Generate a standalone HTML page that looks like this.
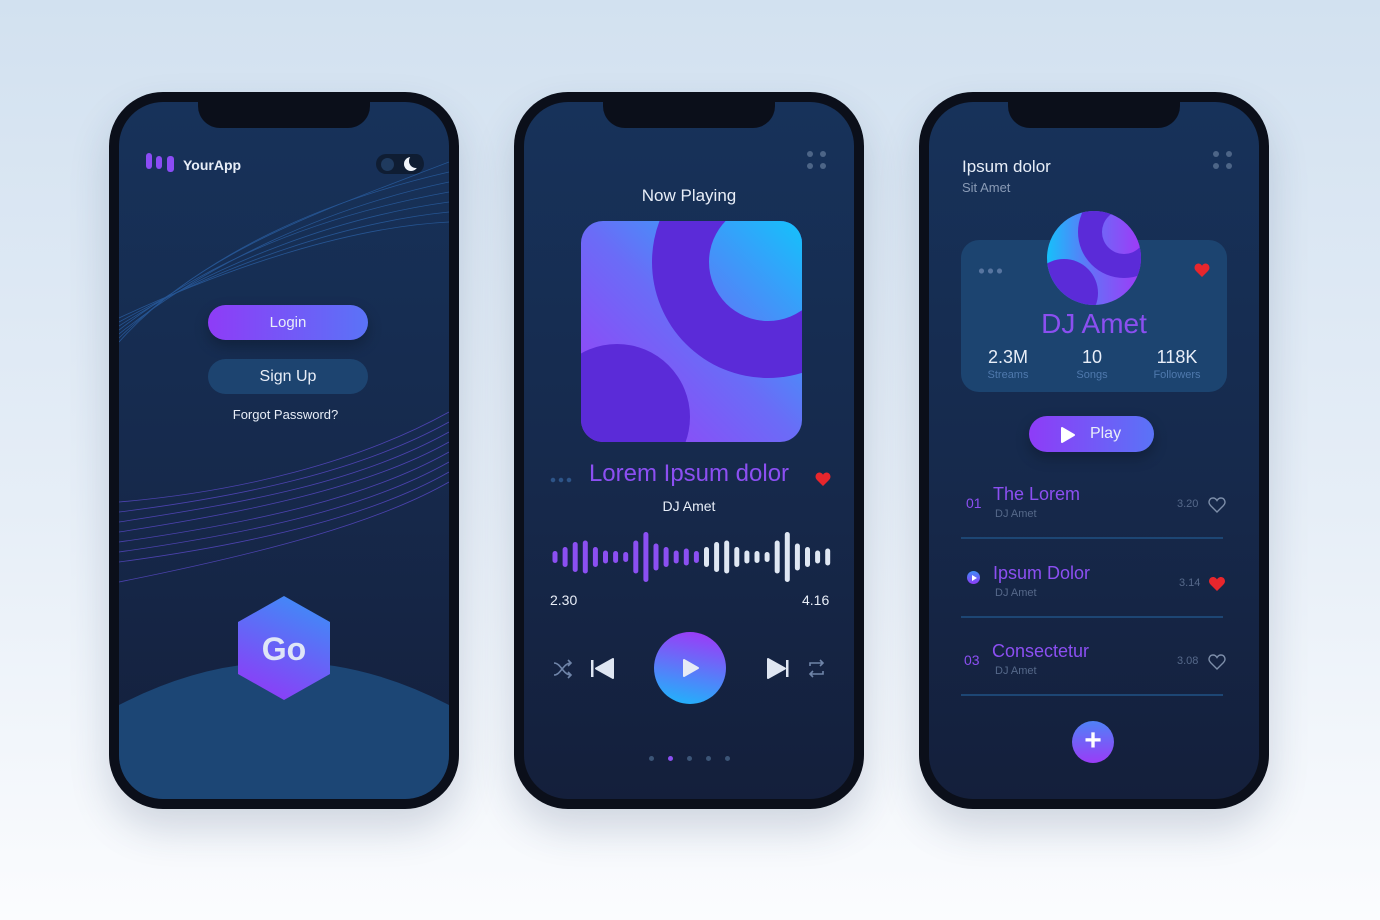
<!DOCTYPE html>
<html><head><meta charset="utf-8"><style>
*{margin:0;padding:0;box-sizing:border-box}
body{width:1380px;height:920px;overflow:hidden;background:linear-gradient(#d2e1f0 0%,#e6eef7 55%,#fbfcfe 100%);font-family:"Liberation Sans",sans-serif;position:relative}
.ph{position:absolute;top:92px;width:350px;height:717px;background:#0b0f1a;border-radius:54px;box-shadow:0 20px 40px rgba(40,60,100,.18)}
.sc{position:absolute;left:10px;top:10px;width:330px;height:697px;border-radius:44px;overflow:hidden;background:linear-gradient(#17325a 0%,#162a4d 50%,#141f3b 100%)}
.notch{position:absolute;left:79px;top:0;width:172px;height:26px;background:#0b0f1a;border-radius:0 0 22px 22px}
.a{position:absolute}
.w{color:#e8eef8}
.btn{position:absolute;border-radius:18px;text-align:center;color:#e8eef8;font-size:15px}
.dots4{position:absolute;width:20px;height:20px}
.dots4 i{position:absolute;width:6px;height:6px;border-radius:50%;background:#4d6587}
.pd{position:absolute;top:654px;width:5px;height:5px;border-radius:50%;background:#3c5577}
</style></head><body>

<!-- Phone 1 -->
<div class="ph" style="left:109px"><div class="sc">
<svg class="a" style="left:0;top:0" width="330" height="697">
<g fill="none" stroke="#2a5fa3" stroke-width="0.8" opacity=".8">
<path d="M0 240 C80 150 200 110 330 60"/><path d="M0 236 C90 150 200 100 330 70"/><path d="M0 232 C90 160 210 105 330 80"/><path d="M0 228 C100 150 220 110 330 90"/><path d="M0 224 C100 160 220 115 330 100"/><path d="M0 220 C110 160 230 120 330 110"/><path d="M0 216 C110 165 230 125 330 120"/>
</g>
<g fill="none" stroke="#5a49c9" stroke-width="0.8" opacity=".8">
<path d="M0 400 C120 390 240 360 330 310"/><path d="M0 410 C120 395 240 370 330 320"/><path d="M0 420 C130 400 240 380 330 330"/><path d="M0 430 C130 410 250 385 330 340"/><path d="M0 440 C140 420 250 395 330 350"/><path d="M0 450 C140 430 250 405 330 360"/><path d="M0 460 C150 440 260 410 330 370"/><path d="M0 480 C150 450 260 420 330 380"/>
</g>
<path d="M-60 697 L-60 640 Q165 480 390 640 L390 697Z" fill="#1c4675"/>
</svg>
<div class="notch"></div>
<div class="a" style="left:27px;top:51px;width:6px;height:16px;border-radius:3px;background:#8b4cf5"></div>
<div class="a" style="left:37px;top:54px;width:6px;height:13px;border-radius:3px;background:#8b4cf5"></div>
<div class="a" style="left:48px;top:54px;width:7px;height:16px;border-radius:3px;background:#8b4cf5"></div>
<div class="a w" style="left:64px;top:55px;font-size:14px;font-weight:bold">YourApp</div>
<div class="a" style="left:257px;top:52px;width:48px;height:20px;border-radius:10px;background:#0f1d33"></div>
<div class="a" style="left:262px;top:56px;width:13px;height:13px;border-radius:50%;background:#1f3a5e"></div>
<div class="a" style="left:285px;top:55px;width:14px;height:14px;border-radius:50%;background:#f0f4fa"></div>
<div class="a" style="left:290px;top:52px;width:14px;height:14px;border-radius:50%;background:#0f1d33"></div>
<div class="btn" style="left:89px;top:203px;width:160px;height:35px;line-height:35px;background:linear-gradient(90deg,#8e3cf7,#5a73f7);box-shadow:0 6px 14px rgba(0,0,0,.25)">Login</div>
<div class="btn" style="left:89px;top:257px;width:160px;height:35px;line-height:35px;background:#1d4470;font-size:16px">Sign Up</div>
<div class="a w" style="left:0;width:333px;text-align:center;top:305px;font-size:13px">Forgot Password?</div>
<svg class="a" style="left:119px;top:494px" width="92" height="104"><defs><linearGradient id="hg" x1="0.7" y1="0" x2="0.3" y2="1"><stop offset="0" stop-color="#3f8cf7"/><stop offset="1" stop-color="#8d3cf7"/></linearGradient></defs><polygon points="46,0 92,26 92,78 46,104 0,78 0,26" fill="url(#hg)"/><text x="46" y="64" text-anchor="middle" font-family="Liberation Sans" font-size="32" font-weight="bold" fill="#dfe6f7">Go</text></svg>
</div></div>

<!-- Phone 2 -->
<div class="ph" style="left:514px"><div class="sc">
<div class="notch"></div>
<div class="dots4" style="left:283px;top:49px"><i style="left:0;top:0"></i><i style="left:13px;top:0"></i><i style="left:0;top:12px"></i><i style="left:13px;top:12px"></i></div>
<div class="a w" style="left:0;width:330px;text-align:center;top:84px;font-size:17px">Now Playing</div>
<svg class="a" style="left:57px;top:119px" width="221" height="221"><defs><linearGradient id="ag" gradientUnits="userSpaceOnUse" x1="221" y1="0" x2="0" y2="221"><stop offset="0" stop-color="#14c2fb"/><stop offset=".5" stop-color="#6a6cf7"/><stop offset="1" stop-color="#a039f7"/></linearGradient><clipPath id="ac"><rect width="221" height="221" rx="22"/></clipPath></defs>
<g clip-path="url(#ac)"><rect width="221" height="221" fill="url(#ag)"/><circle cx="187" cy="41" r="116" fill="#5b2bd8"/><circle cx="187" cy="41" r="59" fill="url(#ag)"/><circle cx="36" cy="196" r="73" fill="#5b2bd8"/></g></svg>
<div class="a" style="left:25px;top:375px;width:24px;height:6px;background:radial-gradient(circle,#2d5488 2px,transparent 2.5px) 0 0/8px 6px"></div>
<div class="a" style="left:0;width:330px;text-align:center;top:358px;font-size:24px;color:#8c4ff2">Lorem Ipsum dolor</div>
<svg class="a" style="left:291px;top:370px" width="16" height="15"><path d="M8 14 L2 8 C-1 5 1 0.5 4.5 0.5 C6.3 0.5 7.3 1.6 8 2.8 C8.7 1.6 9.7 0.5 11.5 0.5 C15 0.5 17 5 14 8Z" fill="#e8262c"/></svg>
<div class="a w" style="left:0;width:330px;text-align:center;top:396px;font-size:14px">DJ Amet</div>
<svg class="a" style="left:0;top:420px" width="330" height="70" id="wave"></svg>
<div class="a w" style="left:26px;top:490px;font-size:14px">2.30</div>
<div class="a w" style="left:278px;top:490px;font-size:14px">4.16</div>
<svg class="a" style="left:29px;top:528px" width="280" height="76">
<g stroke="#6f84a8" stroke-width="1.6" fill="none"><path d="M1 33 C8 33 10 45 18 45 M1 45 C8 45 10 33 18 33 M15 30 L18 33 L15 36 M15 42 L18 45 L15 48"/></g>
<rect x="38" y="30" width="2.5" height="17" fill="#dfe6f2"/><path d="M43 38.5 L60 29 L60 48 Z" fill="#dfe6f2" stroke="#dfe6f2" stroke-width="2" stroke-linejoin="round"/>
<defs><linearGradient id="pg" x1=".6" y1="0" x2=".4" y2="1"><stop offset="0" stop-color="#9a3cf7"/><stop offset="1" stop-color="#23b0fb"/></linearGradient></defs>
<circle cx="137" cy="38" r="36" fill="url(#pg)"/><path d="M131 30 L145 38 L131 46Z" fill="#e6ebf5" stroke="#e6ebf5" stroke-width="2" stroke-linejoin="round"/>
<path d="M215 29 L232 38.5 L215 48 Z" fill="#dfe6f2" stroke="#dfe6f2" stroke-width="2" stroke-linejoin="round"/><rect x="233" y="30" width="2.5" height="17" fill="#dfe6f2"/>
<g stroke="#6f84a8" stroke-width="1.6" fill="none"><path d="M257 36 V33 H270 M267 30 L270 33 L267 36 M270 41 V44 H257 M260 41 L257 44 L260 47"/></g>
</svg>
<div class="pd" style="left:125px"></div><div class="pd" style="left:144px;background:#8c4ff2"></div><div class="pd" style="left:163px"></div><div class="pd" style="left:182px"></div><div class="pd" style="left:201px"></div>
</div></div>

<!-- Phone 3 -->
<div class="ph" style="left:919px"><div class="sc">
<div class="notch"></div>
<div class="dots4" style="left:284px;top:49px"><i style="left:0;top:0"></i><i style="left:13px;top:0"></i><i style="left:0;top:12px"></i><i style="left:13px;top:12px"></i></div>
<div class="a w" style="left:33px;top:55px;font-size:17px">Ipsum dolor</div>
<div class="a" style="left:33px;top:78px;font-size:13px;color:#8a9bb6">Sit Amet</div>
<div class="a" style="left:32px;top:138px;width:266px;height:152px;border-radius:18px;background:#1c4470"></div>
<div class="a" style="left:48px;top:166px;width:27px;height:6px;background:radial-gradient(circle,#5775a0 2.3px,transparent 2.8px) 0 0/9px 6px"></div>
<svg class="a" style="left:265px;top:161px" width="16" height="15"><path d="M8 14 L2 8 C-1 5 1 0.5 4.5 0.5 C6.3 0.5 7.3 1.6 8 2.8 C8.7 1.6 9.7 0.5 11.5 0.5 C15 0.5 17 5 14 8Z" fill="#e8262c"/></svg>
<svg class="a" style="left:117px;top:108px" width="96" height="96"><defs><linearGradient id="cg" gradientUnits="userSpaceOnUse" x1="0" y1="48" x2="96" y2="48"><stop offset="0" stop-color="#14c2fb"/><stop offset=".5" stop-color="#6a6cf7"/><stop offset="1" stop-color="#a039f7"/></linearGradient><clipPath id="cc"><circle cx="48" cy="48" r="47"/></clipPath></defs><g clip-path="url(#cc)"><rect width="96" height="96" fill="url(#cg)"/><circle cx="78" cy="22" r="46" fill="#5b2bd8"/><circle cx="78" cy="22" r="22" fill="url(#cg)"/><circle cx="18" cy="83" r="34" fill="#5b2bd8"/></g></svg>
<div class="a" style="left:0;width:330px;text-align:center;top:206px;font-size:28px;color:#8b4ff0">DJ Amet</div>
<div class="a w" style="left:49px;width:60px;text-align:center;top:245px;font-size:18px">2.3M</div>
<div class="a" style="left:49px;width:60px;text-align:center;top:267px;font-size:11px;color:#4f79ad">Streams</div>
<div class="a w" style="left:133px;width:60px;text-align:center;top:245px;font-size:18px">10</div>
<div class="a" style="left:133px;width:60px;text-align:center;top:267px;font-size:11px;color:#4f79ad">Songs</div>
<div class="a w" style="left:218px;width:60px;text-align:center;top:245px;font-size:18px">118K</div>
<div class="a" style="left:218px;width:60px;text-align:center;top:267px;font-size:11px;color:#4f79ad">Followers</div>
<div class="btn" style="left:100px;top:314px;width:125px;height:36px;line-height:36px;background:linear-gradient(90deg,#8e3cf7,#5a73f7);box-shadow:0 6px 14px rgba(0,0,0,.25);font-size:16px;padding-left:28px">Play</div>
<svg class="a" style="left:130px;top:324px" width="18" height="18"><path d="M3 2 L15 9 L3 16Z" fill="#fff" stroke="#fff" stroke-width="2" stroke-linejoin="round"/></svg>

<div class="a" style="left:37px;top:393px;font-size:14px;color:#8c4ff2">01</div>
<div class="a" style="left:64px;top:382px;font-size:18px;color:#8c4ff2">The Lorem</div>
<div class="a" style="left:66px;top:406px;font-size:11px;color:#56698a">DJ Amet</div>
<div class="a" style="left:248px;top:396px;font-size:11px;color:#56698a">3.20</div>
<svg class="a" style="left:279px;top:395px" width="18" height="16"><path d="M9 15 L2.5 8.5 C-0.5 5.5 1.5 1 5 1 C7 1 8.2 2.2 9 3.5 C9.8 2.2 11 1 13 1 C16.5 1 18.5 5.5 15.5 8.5Z" fill="none" stroke="#7d8ea9" stroke-width="1.4"/></svg>
<div class="a" style="left:32px;top:435px;width:262px;height:2px;background:#1d4674"></div>

<div class="a" style="left:38px;top:469px;width:13px;height:13px;border-radius:50%;background:linear-gradient(#3f8cf7,#8d3cf7)"></div>
<div class="a" style="left:43px;top:472.5px;width:0;height:0;border-left:5px solid #fff;border-top:3px solid transparent;border-bottom:3px solid transparent"></div>
<div class="a" style="left:64px;top:461px;font-size:18px;color:#8c4ff2">Ipsum Dolor</div>
<div class="a" style="left:66px;top:485px;font-size:11px;color:#56698a">DJ Amet</div>
<div class="a" style="left:250px;top:475px;font-size:11px;color:#56698a">3.14</div>
<svg class="a" style="left:279px;top:474px" width="18" height="16"><path d="M9 15 L2.5 8.5 C-0.5 5.5 1.5 1 5 1 C7 1 8.2 2.2 9 3.5 C9.8 2.2 11 1 13 1 C16.5 1 18.5 5.5 15.5 8.5Z" fill="#e8262c"/></svg>
<div class="a" style="left:32px;top:514px;width:262px;height:2px;background:#1d4674"></div>

<div class="a" style="left:35px;top:550px;font-size:14px;color:#8c4ff2">03</div>
<div class="a" style="left:63px;top:539px;font-size:18px;color:#8c4ff2">Consectetur</div>
<div class="a" style="left:66px;top:563px;font-size:11px;color:#56698a">DJ Amet</div>
<div class="a" style="left:248px;top:553px;font-size:11px;color:#56698a">3.08</div>
<svg class="a" style="left:279px;top:552px" width="18" height="16"><path d="M9 15 L2.5 8.5 C-0.5 5.5 1.5 1 5 1 C7 1 8.2 2.2 9 3.5 C9.8 2.2 11 1 13 1 C16.5 1 18.5 5.5 15.5 8.5Z" fill="none" stroke="#7d8ea9" stroke-width="1.4"/></svg>
<div class="a" style="left:32px;top:592px;width:262px;height:2px;background:#1d4674"></div>

<div class="a" style="left:143px;top:619px;width:42px;height:42px;border-radius:50%;background:linear-gradient(#4f82f7,#9a3cf7);color:#fff;font-size:30px;line-height:40px;text-align:center;font-weight:bold">+</div>
</div></div>

<script>
var h=[12,20,30,33,20,13,12,10,33,50,27,20,13,17,12,20,30,33,20,13,12,10,33,50,27,20,13,17];
var s='';for(var i=0;i<28;i++){var x=31+i*10.1,hh=h[i];s+='<rect x="'+(x-2.5)+'" y="'+(35-hh/2)+'" width="5" height="'+hh+'" rx="2.5" fill="'+(i<15?'#8b4ff2':'#dfe7f3')+'"/>';}
document.getElementById('wave').innerHTML=s;
</script>
</body></html>
